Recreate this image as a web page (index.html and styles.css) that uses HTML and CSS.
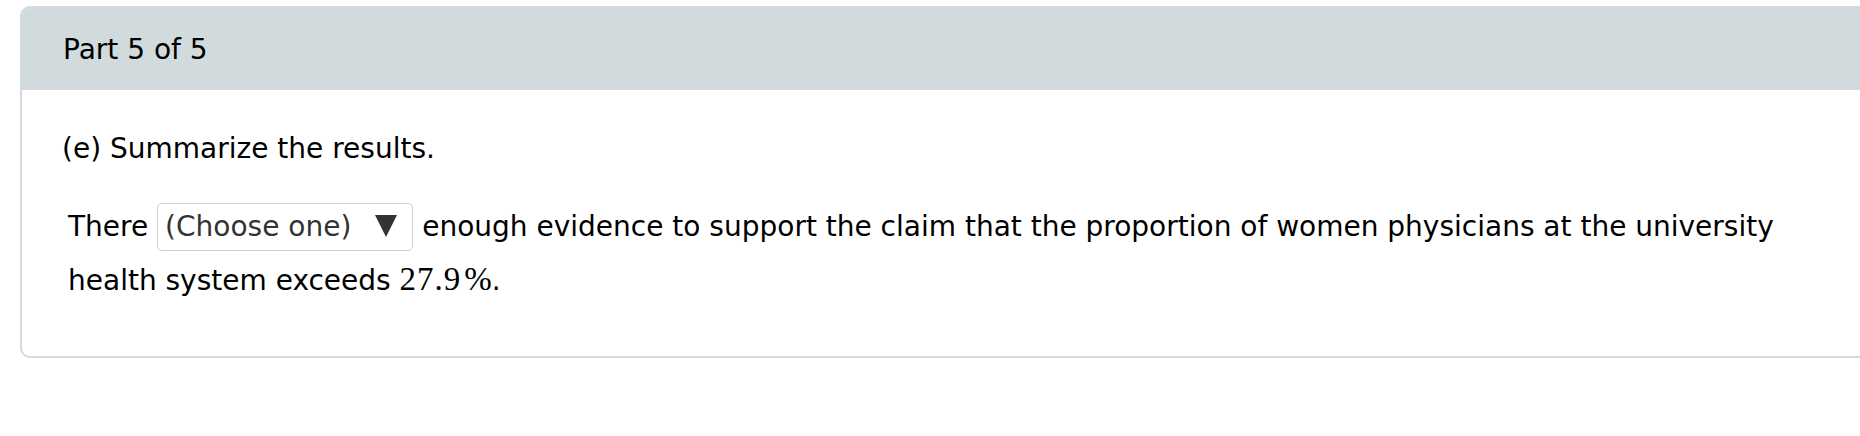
FILE: index.html
```html
<!DOCTYPE html>
<html lang="en">
<head>
<meta charset="utf-8">
<title>Part 5 of 5</title>
<link rel="stylesheet" href="styles.css">
</head>
<body>
<div class="card">
  <div class="card-header">Part 5 of 5</div>
  <div class="card-body">
    <p class="question">(e) Summarize the results.</p>
    <p class="answer">There <span class="select"><span class="select-text">(Choose one)</span><svg class="arrow" width="22" height="22" viewBox="0 0 22 22"><polygon points="0,0 22,0 11,22" fill="#333"/></svg></span> enough evidence to support the claim that the proportion of women physicians at the university health system exceeds <span class="math"><span class="mn">27.9</span><span class="mo">%</span></span>.</p>
  </div>
</div>
</body>
</html>
```

FILE: styles.css
```css
html, body {
  margin: 0;
  padding: 0;
  background: #ffffff;
  overflow: hidden;
}

body {
  font-family: "DejaVu Sans", Verdana, sans-serif;
  font-size: 28px;
  color: #000000;
}

.card {
  margin: 6px -60px 0 20px;
  border: 2px solid #d1dadc;
  border-radius: 10px;
  overflow: hidden;
}

.card-header {
  background: #d1dadd;
  height: 82px;
  box-sizing: border-box;
  padding: 2px 0 0 41px;
  display: flex;
  align-items: center;
  line-height: 32px;
}

.card-body {
  padding: 43px 40px 49px 40px;
}

.question {
  margin: 0;
  line-height: 32px;
}

.answer {
  margin: 36px 0 0 6px;
  line-height: 52px;
  max-width: 1720px;
}

.select {
  display: inline-block;
  box-sizing: border-box;
  height: 48px;
  line-height: 46px;
  border: 1px solid #cfcfcf;
  border-radius: 5px;
  padding: 0 15px 0 7px;
  color: #333333;
  vertical-align: baseline;
}

.select-text {
  margin-right: 24px;
}

.arrow {
  display: inline-block;
  vertical-align: -1px;
}

.math,
.mn,
.mo {
  font-family: "Liberation Serif", "DejaVu Serif", "Times New Roman", serif;
}

.math {
  font-size: 33px;
}

.mn {
  letter-spacing: 1px;
}

.mo {
  margin-left: 3px;
}
```
